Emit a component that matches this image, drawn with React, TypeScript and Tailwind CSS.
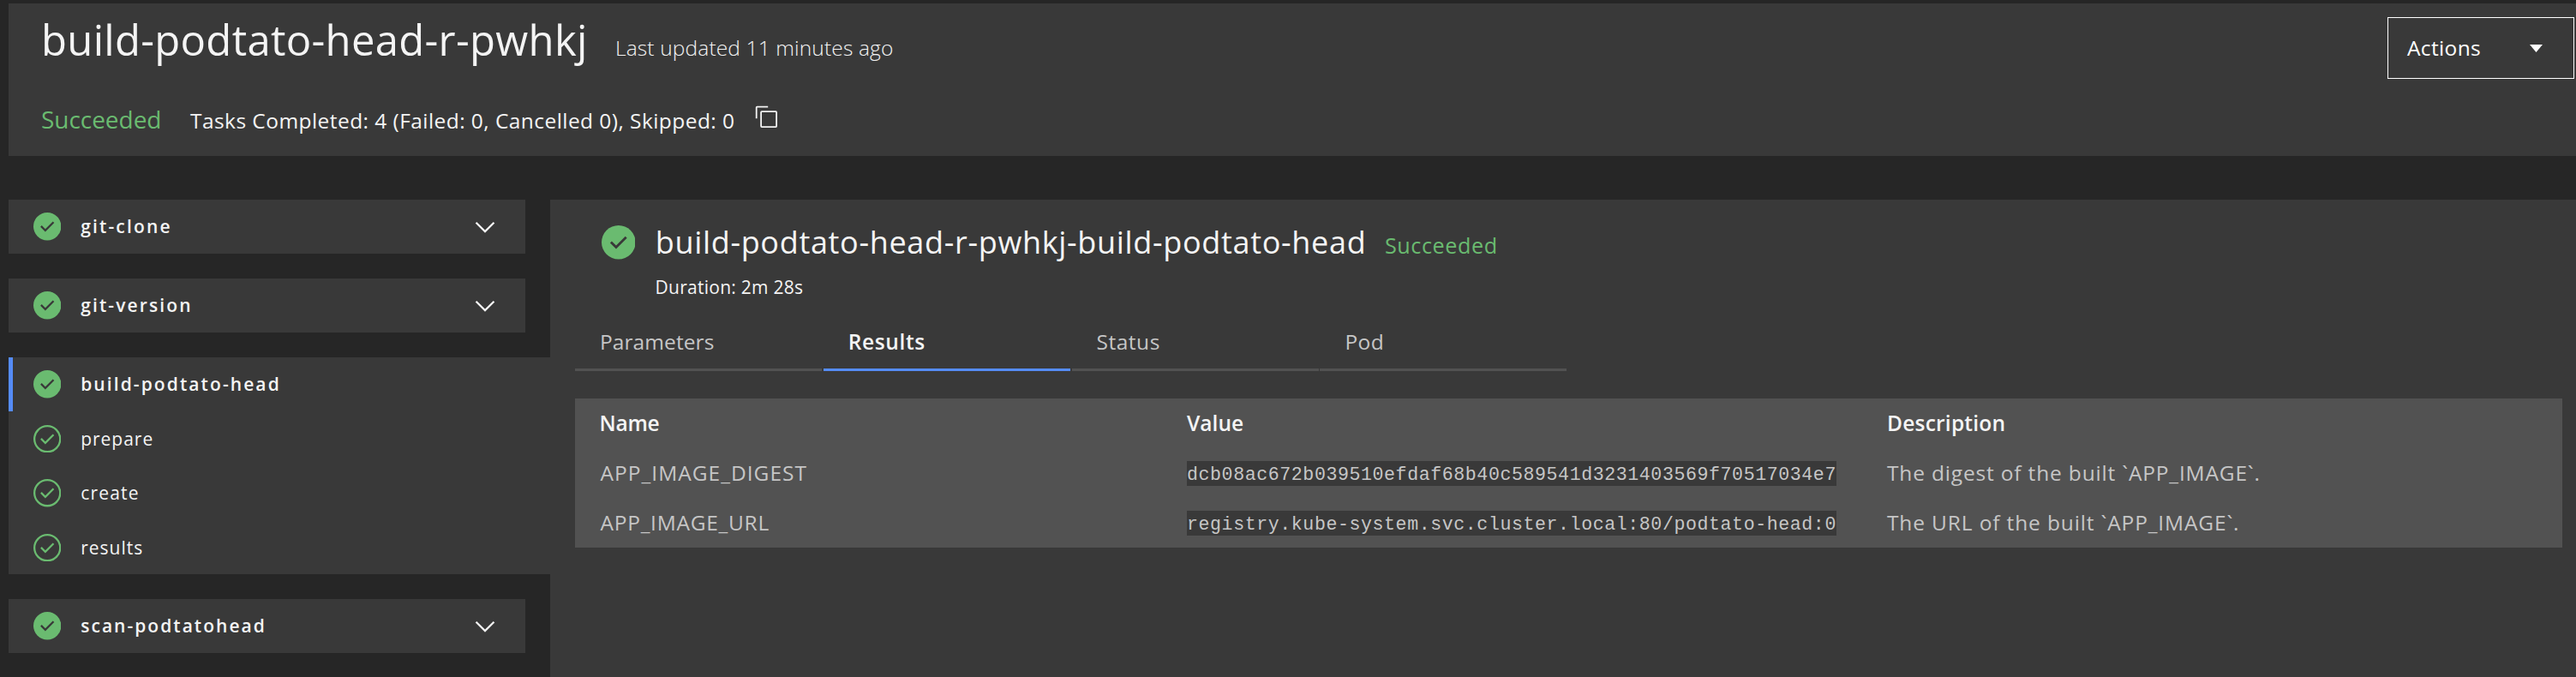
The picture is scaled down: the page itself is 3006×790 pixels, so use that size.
import React from 'react';

const CHECK = '14 21.414 9 16.413 10.413 15 14 18.586 21.585 11 23 12.415';

function CheckFilled({ className }: { className: string }) {
  return (
    <svg viewBox="2 2 28 28" className={className} aria-hidden="true">
      <circle cx="16" cy="16" r="14" fill="#6abb70" />
      <polygon points={CHECK} fill="#393939" />
    </svg>
  );
}

function CheckOutline({ className }: { className: string }) {
  return (
    <svg viewBox="2 2 28 28" className={className} aria-hidden="true">
      <circle cx="16" cy="16" r="13" fill="none" stroke="#6abb70" strokeWidth="2" />
      <polygon points={CHECK} fill="#6abb70" />
    </svg>
  );
}

function ChevronDown() {
  return (
    <svg viewBox="0 0 32 32" className="size-9 shrink-0" aria-hidden="true">
      <polygon points="16 22 6 12 7.4 10.6 16 19.2 24.6 10.6 26 12" fill="#f4f4f4" />
    </svg>
  );
}

function CopyIcon() {
  return (
    <svg viewBox="0 0 32 32" className="-mt-px size-[28.8px] shrink-0 self-start" fill="#f4f4f4" aria-hidden="true">
      <path d="M28,10V28H10V10H28m0-2H10a2,2,0,0,0-2,2V28a2,2,0,0,0,2,2H28a2,2,0,0,0,2-2V10a2,2,0,0,0-2-2Z" />
      <path d="M4,18H2V4A2,2,0,0,1,4,2H18V4H4Z" />
    </svg>
  );
}

function TaskHeading({ name, tracking }: { name: string; tracking: string }) {
  return (
    <>
      <CheckFilled className="size-[32.4px] shrink-0" />
      <span className={`ml-[23px] flex-1 pt-px text-[21px] font-semibold ${tracking}`}>{name}</span>
    </>
  );
}

function Task({ name, tracking }: { name: string; tracking: string }) {
  return (
    <li className="flex h-[63px] w-[603px] items-center bg-[#393939] pr-[29px] pl-[28.8px]">
      <TaskHeading name={name} tracking={tracking} />
      <ChevronDown />
    </li>
  );
}

const steps = [
  { name: 'prepare', tracking: 'tracking-[0.98px]' },
  { name: 'create', tracking: 'tracking-[1.2px]' },
  { name: 'results', tracking: 'tracking-[0.99px]' },
];

const tabs = [
  { name: 'Parameters', style: 'border-[#525252] text-[#c6c6c6] tracking-[0.08px]' },
  { name: 'Results', style: 'border-[#558cf8] font-semibold text-[#f4f4f4] tracking-[0.6px]' },
  { name: 'Status', style: 'border-[#525252] text-[#c6c6c6] tracking-[0.5px]' },
  { name: 'Pod', style: 'border-[#525252] text-[#c6c6c6] tracking-[0.4px]' },
];

const results = [
  {
    name: 'APP_IMAGE_DIGEST',
    nameTracking: 'tracking-[1.02px]',
    value: 'dcb08ac672b039510efdaf68b40c589541d3231403569f70517034e7',
    description: 'The digest of the built `APP_IMAGE`.',
    descTracking: 'tracking-[0.83px]',
  },
  {
    name: 'APP_IMAGE_URL',
    nameTracking: 'tracking-[0.73px]',
    value: 'registry.kube-system.svc.cluster.local:80/podtato-head:0',
    description: 'The URL of the built `APP_IMAGE`.',
    descTracking: 'tracking-[0.86px]',
  },
];

export default function App() {
  return (
    <div className="h-[790px] w-[3006px] overflow-hidden bg-[#262626] pt-1 pl-2.5 font-['Open_Sans',sans-serif] text-[24.5px] whitespace-nowrap text-[#f4f4f4]">
      <header className="flex h-[178px] justify-between bg-[#393939] pr-0.5 pl-[38px]">
        <div className="pt-3.5">
          <div className="flex h-14 items-baseline leading-[56px]">
            <h1 className="w-[670px] text-[49px] tracking-[0.3px]">build-podtato-head-r-pwhkj</h1>
            <span className="font-light tracking-[0.14px]">Last updated 11 minutes ago</span>
          </div>
          <div className="mt-[49px] flex h-8 items-baseline leading-[32px]">
            <span className="w-[174px] text-[28px] tracking-[-0.04px] text-[#6abb70]">Succeeded</span>
            <span className="w-[657.5px] tracking-[0.44px]">
              Tasks Completed: 4 (Failed: 0, Cancelled 0), Skipped: 0
            </span>
            <CopyIcon />
          </div>
        </div>
        <button className="mt-4 flex h-[72px] w-[218px] items-center justify-between border border-white pr-[36px] pl-[22px] tracking-[0.35px] text-white">
          Actions
          <svg viewBox="0 0 15 9" className="h-[9px] w-[15px]" aria-hidden="true">
            <polygon points="0 0 15 0 7.5 9" fill="#fff" />
          </svg>
        </button>
      </header>

      <div className="mt-[51px] flex h-[557px]">
        <ul className="flex w-[632px] flex-col gap-[29px]">
          <Task name="git-clone" tracking="tracking-[2.15px]" />
          <Task name="git-version" tracking="tracking-[2.12px]" />
          <li className="h-[253px] bg-[#393939]">
            <div className="flex h-[63px] items-center border-l-[5px] border-[#558cf8] pl-[23.8px]">
              <TaskHeading name="build-podtato-head" tracking="tracking-[2.09px]" />
            </div>
            {steps.map((s) => (
              <div key={s.name} className="flex h-[63.33px] items-center pt-px pl-[28.8px]">
                <CheckOutline className="size-[32.4px] shrink-0" />
                <span className={`ml-[23px] pt-px text-[21px] ${s.tracking}`}>{s.name}</span>
              </div>
            ))}
          </li>
          <Task name="scan-podtatohead" tracking="tracking-[2.03px]" />
        </ul>

        <main className="flex-1 bg-[#393939] pt-[27px] pl-[29px]">
          <div className="flex h-11 items-baseline pl-[30.6px] leading-[46px]">
            <CheckFilled className="mt-[3px] size-[39.6px] shrink-0 self-start" />
            <h2 className="ml-[23.5px] w-[851.2px] text-[36px] tracking-[0.68px]">
              build-podtato-head-r-pwhkj-build-podtato-head
            </h2>
            <span className="text-[25.2px] tracking-[0.58px] text-[#6abb70]">Succeeded</span>
          </div>
          <div className="mt-[17px] h-7 pl-[93.5px] text-[21px] leading-[28px] tracking-[0.27px]">Duration: 2m 28s</div>

          <nav className="mt-[17px] flex gap-[1.8px]">
            {tabs.map((t) => (
              <div key={t.name} className={`h-[67px] w-[288px] border-b-[3px] pl-[29px] leading-[65px] ${t.style}`}>
                {t.name}
              </div>
            ))}
          </nav>

          <section className="mt-8 h-[174px] w-[2319px] bg-[#525252]">
            <div className="grid h-[58px] grid-cols-[714px_817px_1fr] font-semibold leading-[58px]">
              <span className="pl-[28.5px] tracking-[-0.26px]">Name</span>
              <span className="tracking-[0.03px]">Value</span>
              <span className="tracking-[0.22px]">Description</span>
            </div>
            {results.map((r) => (
              <div
                key={r.name}
                className="grid h-[58px] grid-cols-[714px_817px_1fr] items-center leading-[58px] text-[#c6c6c6]"
              >
                <span className={`pl-[29.5px] ${r.nameTracking}`}>{r.name}</span>
                <code className="mt-px h-[29px] justify-self-start bg-[#393939] font-['Liberation_Mono',monospace] text-[21.6px] leading-[32px] tracking-[0.576px]">
                  {r.value}
                </code>
                <span className={r.descTracking}>{r.description}</span>
              </div>
            ))}
          </section>
        </main>
      </div>
    </div>
  );
}
